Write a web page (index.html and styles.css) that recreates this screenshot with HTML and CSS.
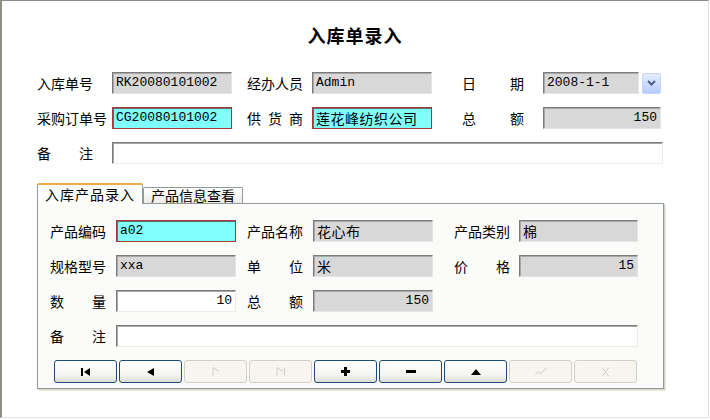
FILE: index.html
```html
<!DOCTYPE html>
<html lang="zh-CN">

<head>
    <meta charset="utf-8">
    <link rel="stylesheet" href="styles.css">
</head>

<body>
    <div class="window">
        <h1 class="title">入库单录入</h1>

        <div class="form">
            <div class="row">
                <div class="lbl"><span class="j">入库单号</span></div>
                <div class="field ro mono w120">RK20080101002</div>
                <div class="lbl lbl2"><span class="j">经办人员</span></div>
                <div class="field ro mono w120">Admin</div>
                <div class="lbl lbl3"><span class="j wide">日期</span></div>
                <div class="field ro mono w96">2008-1-1</div>
                <div class="drop">
                    <svg width="9" height="6" viewBox="0 0 9 6"><path d="M1 1 L4.5 4.5 L8 1" fill="none" stroke="#4d6185" stroke-width="2"/></svg>
                </div>
            </div>
            <div class="row">
                <div class="lbl"><span>采购订单号</span></div>
                <div class="field hot mono w120">CG20080101002</div>
                <div class="lbl lbl2"><span class="j">供货商</span></div>
                <div class="field hot cjk w120">莲花峰纺织公司</div>
                <div class="lbl lbl3"><span class="j wide">总额</span></div>
                <div class="field ro mono num w118">150</div>
            </div>
            <div class="row">
                <div class="lbl"><span class="j">备注</span></div>
                <div class="field memo w551"></div>
            </div>
        </div>

        <div class="tabs">
            <div class="tab active">入库产品录入</div>
            <div class="tab">产品信息查看</div>
        </div>
        <div class="panel">
            <div class="prow">
                <div class="plbl"><span class="j">产品编码</span></div>
                <div class="field hot mono w120">a02</div>
                <div class="plbl plbl2"><span class="j">产品名称</span></div>
                <div class="field ro cjk w120">花心布</div>
                <div class="plbl plbl3"><span class="j">产品类别</span></div>
                <div class="field ro cjk w119">棉</div>
            </div>
            <div class="prow">
                <div class="plbl"><span class="j">规格型号</span></div>
                <div class="field ro mono w120">xxa</div>
                <div class="plbl plbl2"><span class="j">单位</span></div>
                <div class="field ro cjk w120">米</div>
                <div class="plbl plbl3"><span class="j">价格</span></div>
                <div class="field ro mono num w119">15</div>
            </div>
            <div class="prow">
                <div class="plbl"><span class="j">数量</span></div>
                <div class="field memo mono num w120">10</div>
                <div class="plbl plbl2"><span class="j">总额</span></div>
                <div class="field ro mono num w120">150</div>
            </div>
            <div class="prow">
                <div class="plbl"><span class="j">备注</span></div>
                <div class="field memo w522"></div>
            </div>

            <div class="buttons">
                <div class="btn">
                    <svg width="9" height="8" viewBox="0 0 9 8"><rect x="0" y="0" width="2" height="8"/><path d="M9 0 L9 8 L3 4 Z"/></svg>
                </div>
                <div class="btn">
                    <svg width="7" height="8" viewBox="0 0 7 8"><path d="M7 0 L7 8 L0 4 Z"/></svg>
                </div>
                <div class="btn off">
                    <svg width="8" height="9" viewBox="0 0 8 9"><path d="M1 0.5 L1 8.5 M1 0.5 L7 4.5" fill="none" stroke="#cfcdc0" stroke-width="1"/></svg>
                </div>
                <div class="btn off">
                    <svg width="10" height="9" viewBox="0 0 10 9"><path d="M1 0.5 L1 8.5 M1 0.5 L7 4.5 M8.5 0.5 L8.5 8.5" fill="none" stroke="#cfcdc0" stroke-width="1"/></svg>
                </div>
                <div class="btn">
                    <svg width="9" height="9" viewBox="0 0 9 9"><rect x="3" y="0" width="3" height="9"/><rect x="0" y="3" width="9" height="3"/></svg>
                </div>
                <div class="btn">
                    <svg width="10" height="3" viewBox="0 0 10 3"><rect x="0" y="0" width="10" height="3"/></svg>
                </div>
                <div class="btn">
                    <svg width="10" height="6" viewBox="0 0 10 6"><path d="M0 6 L10 6 L5 0 Z"/></svg>
                </div>
                <div class="btn off">
                    <svg width="12" height="7" viewBox="0 0 12 7"><path d="M0.5 6.5 L3 3.5 L5 5.5 L11.5 0.5" fill="none" stroke="#cfcdc0" stroke-width="1"/></svg>
                </div>
                <div class="btn off">
                    <svg width="9" height="10" viewBox="0 0 9 10"><path d="M1 0.5 L8 9.5 M8 0.5 L1 9.5" fill="none" stroke="#cfcdc0" stroke-width="1"/></svg>
                </div>
            </div>
        </div>
    </div>
</body>

</html>
```

FILE: styles.css
```css
body {
    margin: 0;
    background: #fff;
    font-family: "Noto Sans CJK SC", "Liberation Sans", sans-serif;
    font-size: 14px;
    color: #000;
}

.window {
    width: 709px;
    height: 418px;
    box-sizing: border-box;
    border: 1px solid #e2e2e0;
    border-left: 2px solid #8e8e84;
    border-top: 1px solid #8e8e84;
    padding: 22px 0 0 35px;
}

.title {
    margin: 0 0 25px;
    padding-right: 35px;
    text-align: center;
    font-size: 18px;
    font-weight: bold;
    line-height: 24px;
    letter-spacing: 1px;
}

.row,
.prow {
    display: flex;
    align-items: center;
    height: 22px;
    margin-bottom: 13px;
}

.row:last-child,
.prow:last-of-type {
    margin-bottom: 0;
}

.lbl,
.plbl {
    flex: none;
    line-height: 22px;
    white-space: nowrap;
}

.lbl { width: 75px; }
.lbl2 { width: 65px; margin-left: 15px; }
.lbl3 { width: 81px; margin-left: 30px; }

.plbl { width: 66px; }
.plbl2 { margin-left: 11px; }
.plbl3 { width: 65px; margin-left: 21px; }

.j {
    display: inline-block;
    width: 56px;
    text-align: justify;
    text-align-last: justify;
}

.j.wide { width: 62px; }

.field {
    flex: none;
    height: 22px;
    box-sizing: border-box;
    padding: 0 3px;
    line-height: 20px;
    white-space: nowrap;
    overflow: hidden;
}

.mono {
    font-family: "Liberation Mono", "DejaVu Sans Mono", monospace;
    font-size: 13px;
}

.cjk {
    letter-spacing: 0.5px;
}

.num { text-align: right; }

.ro {
    background: #d8d8d8;
    border: 1px solid;
    border-color: #7b7b7b #e4e4e4 #e4e4e4 #7b7b7b;
    box-shadow: inset 1px 1px 0 #a8a8a8;
}

.hot {
    background: #80ffff;
    border: 1px solid #a33a3a;
    box-shadow: inset 1px 1px 0 #6b6b6b;
}

.memo {
    background: #fff;
    border: 1px solid;
    border-color: #7b7b7b #ecece6 #ecece6 #7b7b7b;
    box-shadow: inset 1px 1px 0 #a8a8a8;
}

.w96 { width: 96px; }
.w118 { width: 118px; }
.w119 { width: 119px; }
.w120 { width: 120px; }
.w522 { width: 522px; }
.w551 { width: 551px; }

.drop {
    flex: none;
    width: 19px;
    height: 21px;
    margin-left: 3px;
    box-sizing: border-box;
    border: 1px solid #c3d3fd;
    border-radius: 2px;
    background: linear-gradient(#e4ecfe, #b6ccfb);
    display: flex;
    align-items: center;
    justify-content: center;
}

/* tab strip */
.tabs {
    display: flex;
    align-items: flex-end;
    height: 20px;
    margin-top: 19px;
    position: relative;
    z-index: 1;
}

.tab {
    box-sizing: border-box;
    height: 16px;
    width: 100px;
    border: 1px solid #919b9c;
    border-bottom: none;
    border-radius: 2px 2px 0 0;
    background: linear-gradient(#ffffff, #ecebe6);
    line-height: 15px;
    text-align: center;
    white-space: nowrap;
}

.tab.active {
    width: 106px;
    height: 21px;
    margin-bottom: -1px;
    padding-top: 2px;
    border-top: 2px solid #f3a948;
    background: #fcfcfb;
    letter-spacing: 1px;
}

.panel {
    width: 627px;
    height: 186px;
    box-sizing: border-box;
    border: 1px solid #919b9c;
    background: #fbfbf9;
    box-shadow: 1px 1px 0 #d6d5c8, 2px 2px 0 #eceae0;
    padding: 16px 0 0 12px;
}

.buttons {
    display: flex;
    gap: 2px;
    margin: 8px 0 0 4px;
}

.btn {
    width: 63px;
    height: 23px;
    box-sizing: border-box;
    border: 1px solid #1c4a7c;
    border-radius: 3px;
    background: linear-gradient(#ffffff, #f3f3ef 70%, #dcdad0);
    display: flex;
    align-items: center;
    justify-content: center;
}

.btn svg {
    fill: #000;
}

.btn.off {
    border-color: #d2d0c4;
    background: #f6f5ef;
}
```
